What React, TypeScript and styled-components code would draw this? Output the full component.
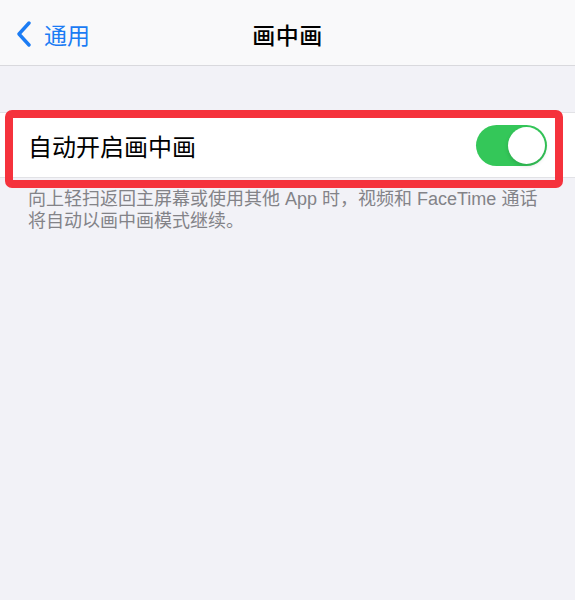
import React from "react";
import styled, { createGlobalStyle } from "styled-components";

const GlobalStyle = createGlobalStyle`
  html, body {
    margin: 0;
    padding: 0;
    background: #f2f2f7;
    font-family: "Noto Sans CJK SC", "Noto Sans", sans-serif;
  }
`;

const Page = styled.div`
  width: 575px;
  min-height: 600px;
  background: #f2f2f7;
`;

const NavBar = styled.div`
  height: 66px;
  box-sizing: border-box;
  padding-top: 3px;
  display: grid;
  grid-template-columns: 1fr auto 1fr;
  align-items: center;
  background: #f9f9fa;
  border-bottom: 1px solid #d9d9dd;
`;

const BackButton = styled.div`
  display: flex;
  align-items: center;
  gap: 12px;
  padding-left: 16px;
  color: #1b7cf4;
  font-size: 23px;
  line-height: 1;
  & svg {
    display: block;
  }
`;

const Title = styled.div`
  font-size: 23px;
  font-weight: 500;
  color: #000;
  letter-spacing: 0.5px;
`;

const Section = styled.div`
  margin-top: 46px;
  position: relative;
`;

const Cell = styled.div`
  height: 66px;
  box-sizing: border-box;
  display: flex;
  align-items: center;
  justify-content: space-between;
  padding: 0 28px;
  background: #fff;
  border-top: 1px solid #e2e2e6;
  border-bottom: 1px solid #e2e2e6;
`;

const Label = styled.span`
  font-size: 24px;
  color: #000;
`;

const Toggle = styled.div<{ $on: boolean }>`
  width: 71px;
  height: 41px;
  border-radius: 21px;
  background: ${(p) => (p.$on ? "#34c759" : "#e9e9eb")};
  display: flex;
  align-items: center;
  justify-content: ${(p) => (p.$on ? "flex-end" : "flex-start")};
  padding: 0 2px;
  box-sizing: border-box;
`;

const Knob = styled.div`
  width: 37px;
  height: 37px;
  border-radius: 50%;
  background: #fff;
  box-shadow: 0 2px 4px rgba(0, 0, 0, 0.15);
`;

const Highlight = styled.div`
  position: absolute;
  left: 5px;
  right: 12px;
  top: -2px;
  bottom: -10px;
  border: 8px solid #f5323c;
  border-radius: 7px;
  pointer-events: none;
`;

const Footer = styled.p`
  margin: 0;
  padding: 10px 28px 0;
  font-family: "Liberation Sans", "Noto Sans CJK SC", sans-serif;
  font-size: 18px;
  line-height: 22px;
  color: #838388;
`;

const FooterLine = styled.span`
  display: block;
`;

export default function App() {
  return (
    <Page>
      <GlobalStyle />
      <NavBar>
        <BackButton>
          <svg width="16" height="26" viewBox="0 0 16 26">
            <path
              d="M13 2 L3 13 L13 24"
              fill="none"
              stroke="#1b7cf4"
              strokeWidth="3.4"
              strokeLinecap="round"
              strokeLinejoin="round"
            />
          </svg>
          <span>通用</span>
        </BackButton>
        <Title>画中画</Title>
        <div />
      </NavBar>
      <Section>
        <Cell>
          <Label>自动开启画中画</Label>
          <Toggle $on>
            <Knob />
          </Toggle>
        </Cell>
        <Highlight />
      </Section>
      <Footer>
        <FooterLine>向上轻扫返回主屏幕或使用其他 App 时，视频和 FaceTime 通话</FooterLine>
        <FooterLine>将自动以画中画模式继续。</FooterLine>
      </Footer>
    </Page>
  );
}
